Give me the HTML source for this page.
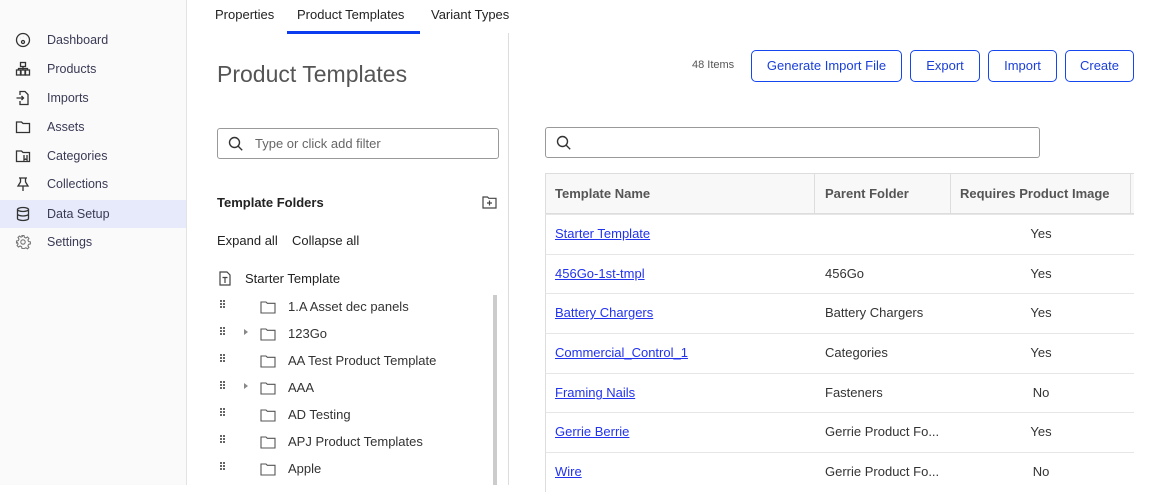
<!DOCTYPE html>
<html><head><meta charset="utf-8"><style>
*{box-sizing:border-box;margin:0;padding:0}
body{width:1168px;height:485px;overflow:hidden;background:#fff;font-family:"Liberation Sans",sans-serif;font-size:13px;color:#333;position:relative}
.a{position:absolute;white-space:nowrap}
.side{position:absolute;left:0;top:0;width:187px;height:485px;background:#fafafa;border-right:1px solid #e3e3e3}
.nav{position:absolute;left:0;width:186px;height:28px;line-height:28px;padding-left:47px;color:#3a3a55;font-size:12.5px}
.nav svg{position:absolute;left:15px;top:6px}
.act{background:#e6eafb}
.tab{position:absolute;top:7px;font-size:13px;color:#222}
.btn{position:absolute;top:50px;height:32px;border:1px solid #1546ee;border-radius:5px;color:#1a3fd8;line-height:30px;text-align:center;font-size:13px;background:#fff}
.inp{position:absolute;border:1px solid #999;border-radius:3px;height:31px}
.row{position:absolute;left:545px;width:589px;height:40px;border-top:1px solid #e6e6e6;border-left:1px solid #ddd}
.row a{position:absolute;left:9px;top:11px;color:#2233ee;text-decoration:underline}
.row .p{position:absolute;left:279px;top:11px}
.row .y{position:absolute;left:470px;width:50px;text-align:center;top:11px}
.tree{position:absolute;left:219px;height:27px;width:270px}
.tree svg.d{position:absolute;left:1px;top:6px}
.tree svg.f{position:absolute;left:41px;top:6px}
.tree span{position:absolute;left:69px;top:5px;color:#333}
.tri{position:absolute;left:25px;top:8px;width:0;height:0;border-left:4px solid #888;border-top:3px solid transparent;border-bottom:3px solid transparent}
</style></head><body>
<div class="side">
<div class="nav" style="top:26px"><svg width="16" height="16" viewBox="0 0 16 16" fill="none" stroke="#333" stroke-width="1.3"><circle cx="8" cy="8" r="6.5"/><circle cx="8" cy="10" r="1.5"/><path d="M5 6h.1M8 4.5h.1M11 6h.1"/></svg>Dashboard</div>
<div class="nav" style="top:55px"><svg width="16" height="16" viewBox="0 0 16 16" fill="none" stroke="#333" stroke-width="1.3"><rect x="5.5" y="1.5" width="5" height="4"/><rect x="1.5" y="9" width="4" height="5"/><rect x="6" y="9" width="4" height="5"/><rect x="10.5" y="9" width="4" height="5"/><path d="M8 5.5v3.5M3.5 9V7.5h9V9"/></svg>Products</div>
<div class="nav" style="top:84px"><svg width="16" height="16" viewBox="0 0 16 16" fill="none" stroke="#333" stroke-width="1.3"><path d="M5 5V1.5h5l3 3v10H5V11M1.5 8h7M6.5 6l2 2-2 2"/></svg>Imports</div>
<div class="nav" style="top:113px"><svg width="16" height="16" viewBox="0 0 16 16" fill="none" stroke="#333" stroke-width="1.3"><path d="M1.5 3h5l1.5 1.5h6.5v9h-13z"/></svg>Assets</div>
<div class="nav" style="top:142px"><svg width="16" height="16" viewBox="0 0 16 16" fill="none" stroke="#333" stroke-width="1.3"><path d="M1.5 3h5l1.5 1.5h6.5v9h-13z M9 7v5l1.5-1 1.5 1V7"/></svg>Categories</div>
<div class="nav" style="top:170px"><svg width="16" height="16" viewBox="0 0 16 16" fill="none" stroke="#333" stroke-width="1.3"><path d="M4 2h8M5.5 2v4L3 10h10l-2.5-4V2M8 10v5"/></svg>Collections</div>
<div class="nav act" style="top:200px"><svg width="16" height="16" viewBox="0 0 16 16" fill="none" stroke="#333" stroke-width="1.3"><ellipse cx="8" cy="3.5" rx="5.5" ry="2"/><path d="M2.5 3.5v9c0 1.1 2.5 2 5.5 2s5.5-.9 5.5-2v-9M2.5 8c0 1.1 2.5 2 5.5 2s5.5-.9 5.5-2"/></svg>Data Setup</div>
<div class="nav" style="top:228px"><svg width="16" height="16" viewBox="0 0 16 16" fill="none" stroke="#777" stroke-width="1.1"><circle cx="8" cy="8" r="2.2"/><path d="M7 1.5h2l.4 1.8 1.5.7 1.6-1 1.4 1.4-1 1.6.7 1.5 1.8.4v2l-1.8.4-.7 1.5 1 1.6-1.4 1.4-1.6-1-1.5.7L9 14.5H7l-.4-1.8-1.5-.7-1.6 1-1.4-1.4 1-1.6-.7-1.5L1.5 9V7l1.8-.4.7-1.5-1-1.6 1.4-1.4 1.6 1 1.5-.7z"/></svg>Settings</div>
</div>

<div class="tab" style="left:215px">Properties</div>
<div class="tab" style="left:297px">Product Templates</div>
<div class="tab" style="left:431px">Variant Types</div>
<div class="a" style="left:287px;top:31px;width:133px;height:3px;background:#0b3cf0"></div>
<div class="a" style="left:508px;top:33px;width:1px;height:452px;background:#ddd"></div>

<div class="a" style="left:217px;top:61px;font-size:23px;color:#555">Product Templates</div>
<div class="inp" style="left:217px;top:128px;width:282px"><svg class="a" style="left:10px;top:7px" width="16" height="16" viewBox="0 0 16 16" fill="none" stroke="#333" stroke-width="1.4"><circle cx="6.5" cy="6.5" r="5"/><path d="M10.2 10.2l4 4"/></svg><span class="a" style="left:37px;top:7px;color:#666">Type or click add filter</span></div>

<div class="a" style="left:217px;top:195px;font-weight:bold;color:#222">Template Folders</div>
<svg class="a" style="left:482px;top:195px" width="15" height="14" viewBox="0 0 15 14" fill="none" stroke="#444" stroke-width="1.2"><path d="M1 2h4.5l1.3 1.3H14v9.7H1z M7.5 5.5v5M5 8h5"/></svg>
<div class="a" style="left:217px;top:233px;color:#222">Expand all</div>
<div class="a" style="left:292px;top:233px;color:#222">Collapse all</div>
<svg class="a" style="left:219px;top:271px" width="12" height="15" viewBox="0 0 12 15" fill="none" stroke="#444" stroke-width="1.2"><path d="M1 1h7l3 3v10H1z M3.5 6.5h5M6 6.5V12"/></svg>
<div class="a" style="left:245px;top:271px;color:#222">Starter Template</div>
<div class="a" style="left:493px;top:295px;width:4px;height:190px;background:#ccc"></div>

<svg width="0" height="0" style="position:absolute"><defs><g id="dd" fill="#666"><rect x="0" y="0" width="2" height="2"/><rect x="3" y="0" width="2" height="2"/><rect x="0" y="3" width="2" height="2"/><rect x="3" y="3" width="2" height="2"/><rect x="0" y="6" width="2" height="2"/><rect x="3" y="6" width="2" height="2"/></g><path id="fd" d="M1 2h5l1.3 1.3H15v9.7H1z"/></defs></svg>

<div class="tree" style="top:294px"><svg class="d" width="5" height="8"><use href="#dd"/></svg><svg class="f" width="16" height="14" viewBox="0 0 16 14" fill="none" stroke="#555" stroke-width="1.1"><use href="#fd"/></svg><span>1.A Asset dec panels</span></div>
<div class="tree" style="top:321px"><svg class="d" width="5" height="8"><use href="#dd"/></svg><div class="tri"></div><svg class="f" width="16" height="14" viewBox="0 0 16 14" fill="none" stroke="#555" stroke-width="1.1"><use href="#fd"/></svg><span>123Go</span></div>
<div class="tree" style="top:348px"><svg class="d" width="5" height="8"><use href="#dd"/></svg><svg class="f" width="16" height="14" viewBox="0 0 16 14" fill="none" stroke="#555" stroke-width="1.1"><use href="#fd"/></svg><span>AA Test Product Template</span></div>
<div class="tree" style="top:375px"><svg class="d" width="5" height="8"><use href="#dd"/></svg><div class="tri"></div><svg class="f" width="16" height="14" viewBox="0 0 16 14" fill="none" stroke="#555" stroke-width="1.1"><use href="#fd"/></svg><span>AAA</span></div>
<div class="tree" style="top:402px"><svg class="d" width="5" height="8"><use href="#dd"/></svg><svg class="f" width="16" height="14" viewBox="0 0 16 14" fill="none" stroke="#555" stroke-width="1.1"><use href="#fd"/></svg><span>AD Testing</span></div>
<div class="tree" style="top:429px"><svg class="d" width="5" height="8"><use href="#dd"/></svg><svg class="f" width="16" height="14" viewBox="0 0 16 14" fill="none" stroke="#555" stroke-width="1.1"><use href="#fd"/></svg><span>APJ Product Templates</span></div>
<div class="tree" style="top:456px"><svg class="d" width="5" height="8"><use href="#dd"/></svg><svg class="f" width="16" height="14" viewBox="0 0 16 14" fill="none" stroke="#555" stroke-width="1.1"><use href="#fd"/></svg><span>Apple</span></div>

<div class="a" style="left:692px;top:59px;font-size:11px;color:#555">48 Items</div>
<div class="btn" style="left:751px;width:151px">Generate Import File</div>
<div class="btn" style="left:910px;width:70px">Export</div>
<div class="btn" style="left:988px;width:69px">Import</div>
<div class="btn" style="left:1065px;width:69px">Create</div>

<div class="inp" style="left:545px;top:127px;width:495px"><svg class="a" style="left:10px;top:7px" width="16" height="16" viewBox="0 0 16 16" fill="none" stroke="#333" stroke-width="1.4"><circle cx="6.5" cy="6.5" r="5"/><path d="M10.2 10.2l4 4"/></svg></div>

<div class="a" style="left:545px;top:173px;width:589px;height:41px;background:#f8f8f8;border:1px solid #ddd;border-right:none">
<div class="a" style="left:268px;top:0;width:1px;height:40px;background:#ddd"></div>
<div class="a" style="left:404px;top:0;width:1px;height:40px;background:#ddd"></div>
<div class="a" style="left:584px;top:0;width:1px;height:40px;background:#ddd"></div>
<span class="a" style="left:9px;top:12px;color:#555;font-weight:bold">Template Name</span>
<span class="a" style="left:279px;top:12px;color:#555;font-weight:bold">Parent Folder</span>
<span class="a" style="left:414px;top:12px;color:#555;font-weight:bold">Requires Product Image</span>
</div>
<div class="row" style="top:214px"><a>Starter Template</a><span class="y">Yes</span></div>
<div class="row" style="top:254px"><a>456Go-1st-tmpl</a><span class="p">456Go</span><span class="y">Yes</span></div>
<div class="row" style="top:293px"><a>Battery Chargers</a><span class="p">Battery Chargers</span><span class="y">Yes</span></div>
<div class="row" style="top:333px"><a>Commercial_Control_1</a><span class="p">Categories</span><span class="y">Yes</span></div>
<div class="row" style="top:373px"><a>Framing Nails</a><span class="p">Fasteners</span><span class="y">No</span></div>
<div class="row" style="top:412px"><a>Gerrie Berrie</a><span class="p">Gerrie Product Fo...</span><span class="y">Yes</span></div>
<div class="row" style="top:452px"><a>Wire</a><span class="p">Gerrie Product Fo...</span><span class="y">No</span></div>
</body></html>
